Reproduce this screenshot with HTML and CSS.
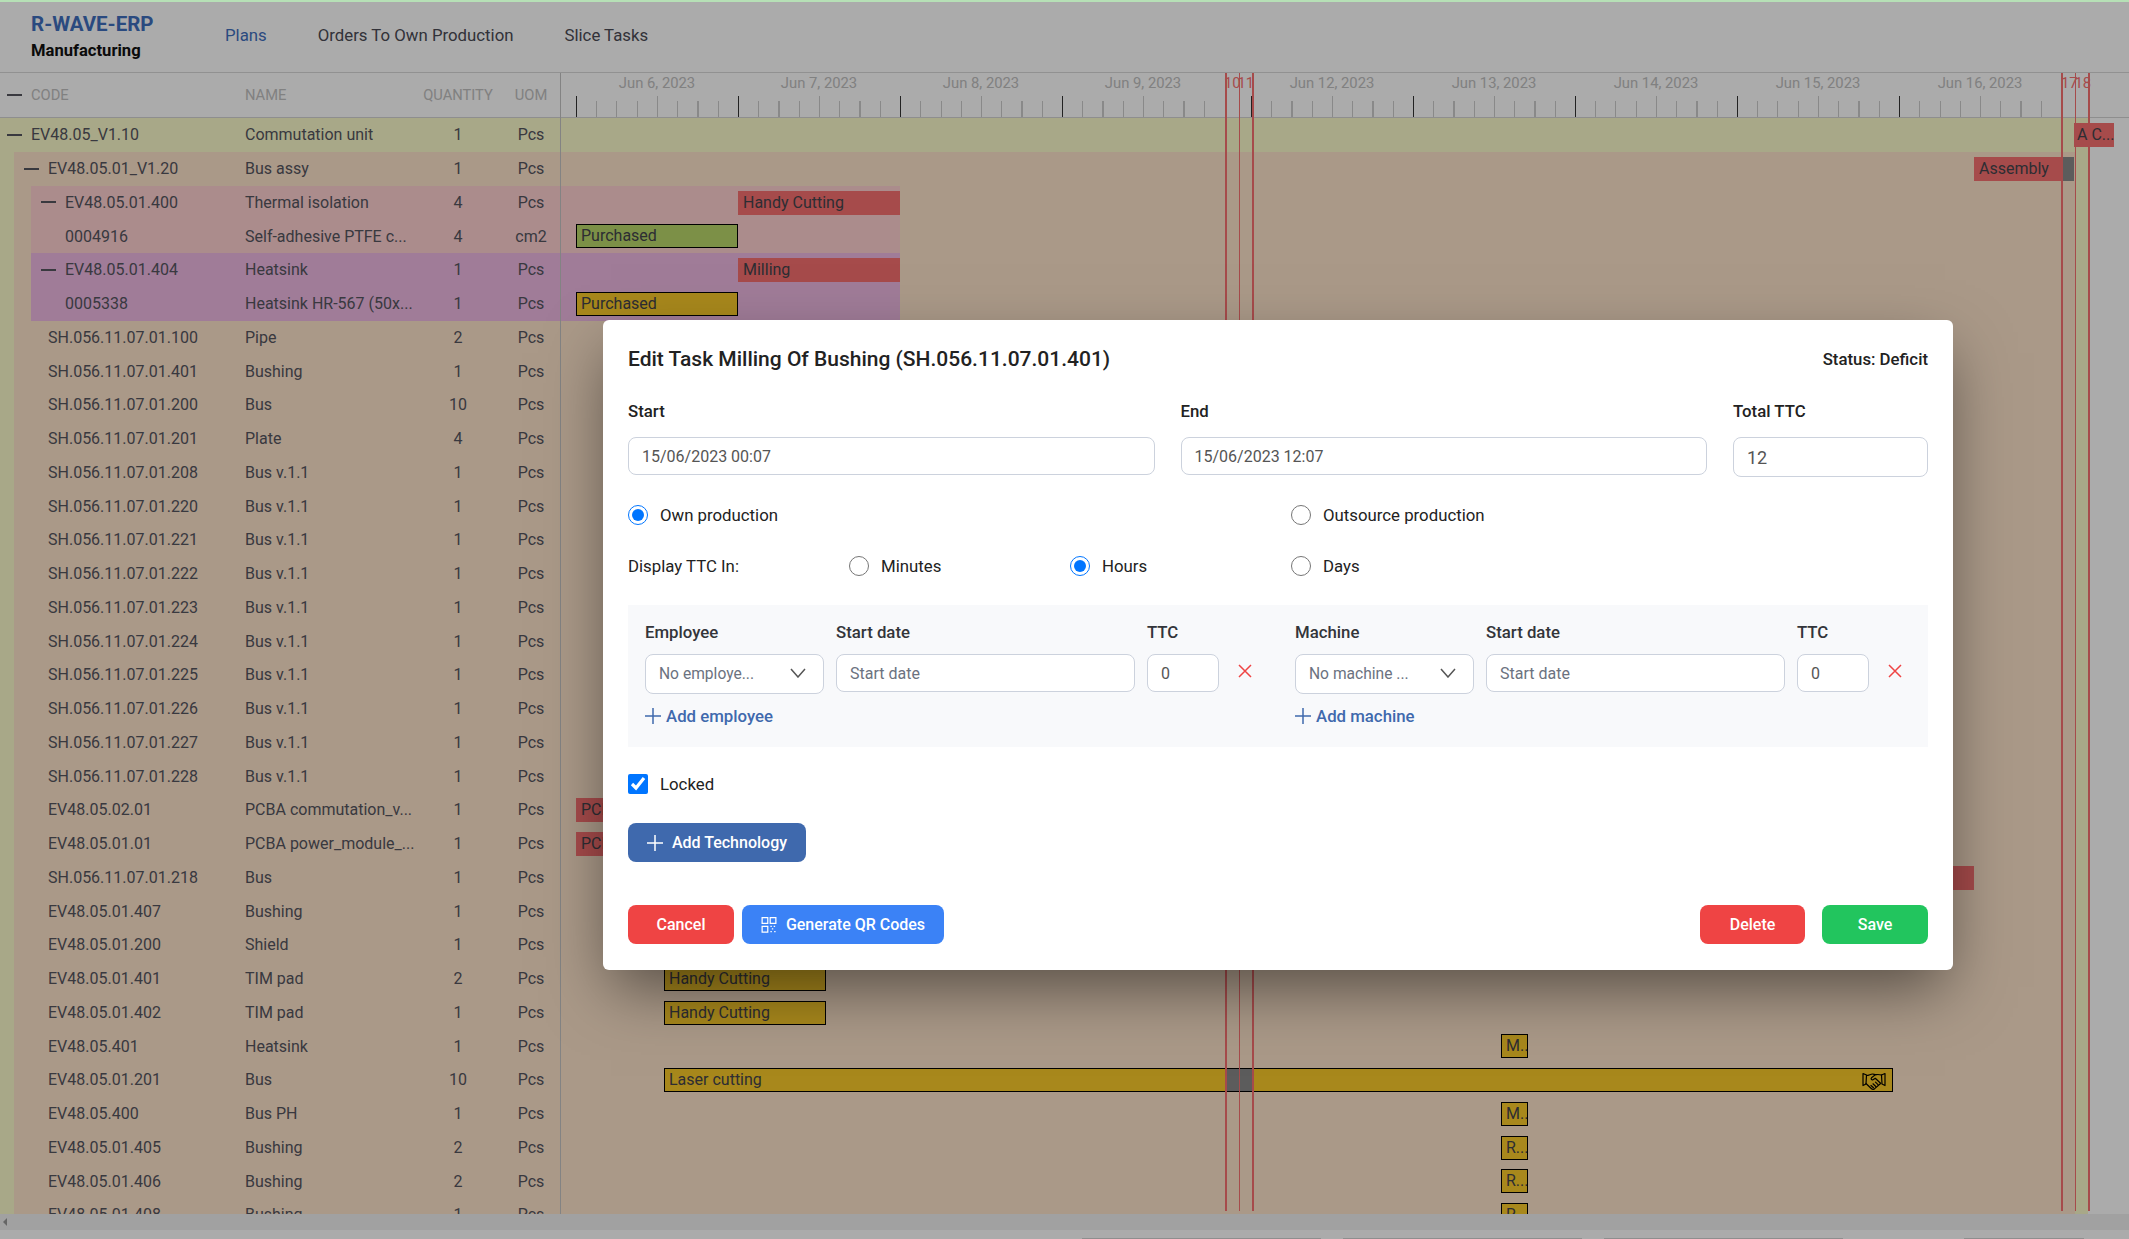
FILE: index.html
```html
<!DOCTYPE html>
<html lang="en">
  <head>
    <meta charset="UTF-8" />
    <title>R-WAVE-ERP Manufacturing</title>
    <link rel="stylesheet" href="styles.css">
  </head>
  <body>
    <div class="page">
      <div class="topline"></div>
      <div class="shell">
        <header class="navbar">
          <div class="brand">
            <div class="brand-name">R-WAVE-ERP</div>
            <div class="brand-sub">Manufacturing</div>
          </div>
          <nav class="nav">
            <a class="nav-link active">Plans</a>
            <a class="nav-link">Orders To Own Production</a>
            <a class="nav-link">Slice Tasks</a>
          </nav>
        </header>

        <div class="gantt">
          <!-- left tree table -->
          <section class="bom">
            <div class="bom-head row">
              <span class="toggle minus"></span>
              <span class="code">CODE</span>
              <span class="name">NAME</span>
              <span class="qty">QUANTITY</span>
              <span class="uom">UOM</span>
            </div>
            <div class="bom-body">
              <div class="row root"><span class="toggle minus"></span><span class="code">EV48.05_V1.10</span><span class="name">Commutation unit</span><span class="qty">1</span><span class="uom">Pcs</span></div>
              <div class="band band-brown">
                <div class="row"><span class="toggle minus"></span><span class="code">EV48.05.01_V1.20</span><span class="name">Bus assy</span><span class="qty">1</span><span class="uom">Pcs</span></div>
                <div class="band band-pink">
                  <div class="row"><span class="toggle minus"></span><span class="code">EV48.05.01.400</span><span class="name">Thermal isolation</span><span class="qty">4</span><span class="uom">Pcs</span></div>
                  <div class="row"><span class="toggle"></span><span class="code">0004916</span><span class="name">Self-adhesive PTFE c...</span><span class="qty">4</span><span class="uom">cm2</span></div>
                </div>
                <div class="band band-purple">
                  <div class="row"><span class="toggle minus"></span><span class="code">EV48.05.01.404</span><span class="name">Heatsink</span><span class="qty">1</span><span class="uom">Pcs</span></div>
                  <div class="row"><span class="toggle"></span><span class="code">0005338</span><span class="name">Heatsink HR-567 (50x...</span><span class="qty">1</span><span class="uom">Pcs</span></div>
                </div>
                <div class="row"><span class="toggle"></span><span class="code">SH.056.11.07.01.100</span><span class="name">Pipe</span><span class="qty">2</span><span class="uom">Pcs</span></div>
                <div class="row"><span class="toggle"></span><span class="code">SH.056.11.07.01.401</span><span class="name">Bushing</span><span class="qty">1</span><span class="uom">Pcs</span></div>
                <div class="row"><span class="toggle"></span><span class="code">SH.056.11.07.01.200</span><span class="name">Bus</span><span class="qty">10</span><span class="uom">Pcs</span></div>
                <div class="row"><span class="toggle"></span><span class="code">SH.056.11.07.01.201</span><span class="name">Plate</span><span class="qty">4</span><span class="uom">Pcs</span></div>
                <div class="row"><span class="toggle"></span><span class="code">SH.056.11.07.01.208</span><span class="name">Bus v.1.1</span><span class="qty">1</span><span class="uom">Pcs</span></div>
                <div class="row"><span class="toggle"></span><span class="code">SH.056.11.07.01.220</span><span class="name">Bus v.1.1</span><span class="qty">1</span><span class="uom">Pcs</span></div>
                <div class="row"><span class="toggle"></span><span class="code">SH.056.11.07.01.221</span><span class="name">Bus v.1.1</span><span class="qty">1</span><span class="uom">Pcs</span></div>
                <div class="row"><span class="toggle"></span><span class="code">SH.056.11.07.01.222</span><span class="name">Bus v.1.1</span><span class="qty">1</span><span class="uom">Pcs</span></div>
                <div class="row"><span class="toggle"></span><span class="code">SH.056.11.07.01.223</span><span class="name">Bus v.1.1</span><span class="qty">1</span><span class="uom">Pcs</span></div>
                <div class="row"><span class="toggle"></span><span class="code">SH.056.11.07.01.224</span><span class="name">Bus v.1.1</span><span class="qty">1</span><span class="uom">Pcs</span></div>
                <div class="row"><span class="toggle"></span><span class="code">SH.056.11.07.01.225</span><span class="name">Bus v.1.1</span><span class="qty">1</span><span class="uom">Pcs</span></div>
                <div class="row"><span class="toggle"></span><span class="code">SH.056.11.07.01.226</span><span class="name">Bus v.1.1</span><span class="qty">1</span><span class="uom">Pcs</span></div>
                <div class="row"><span class="toggle"></span><span class="code">SH.056.11.07.01.227</span><span class="name">Bus v.1.1</span><span class="qty">1</span><span class="uom">Pcs</span></div>
                <div class="row"><span class="toggle"></span><span class="code">SH.056.11.07.01.228</span><span class="name">Bus v.1.1</span><span class="qty">1</span><span class="uom">Pcs</span></div>
                <div class="row"><span class="toggle"></span><span class="code">EV48.05.02.01</span><span class="name">PCBA commutation_v...</span><span class="qty">1</span><span class="uom">Pcs</span></div>
                <div class="row"><span class="toggle"></span><span class="code">EV48.05.01.01</span><span class="name">PCBA power_module_...</span><span class="qty">1</span><span class="uom">Pcs</span></div>
                <div class="row"><span class="toggle"></span><span class="code">SH.056.11.07.01.218</span><span class="name">Bus</span><span class="qty">1</span><span class="uom">Pcs</span></div>
                <div class="row"><span class="toggle"></span><span class="code">EV48.05.01.407</span><span class="name">Bushing</span><span class="qty">1</span><span class="uom">Pcs</span></div>
                <div class="row"><span class="toggle"></span><span class="code">EV48.05.01.200</span><span class="name">Shield</span><span class="qty">1</span><span class="uom">Pcs</span></div>
                <div class="row"><span class="toggle"></span><span class="code">EV48.05.01.401</span><span class="name">TIM pad</span><span class="qty">2</span><span class="uom">Pcs</span></div>
                <div class="row"><span class="toggle"></span><span class="code">EV48.05.01.402</span><span class="name">TIM pad</span><span class="qty">1</span><span class="uom">Pcs</span></div>
                <div class="row"><span class="toggle"></span><span class="code">EV48.05.401</span><span class="name">Heatsink</span><span class="qty">1</span><span class="uom">Pcs</span></div>
                <div class="row"><span class="toggle"></span><span class="code">EV48.05.01.201</span><span class="name">Bus</span><span class="qty">10</span><span class="uom">Pcs</span></div>
                <div class="row"><span class="toggle"></span><span class="code">EV48.05.400</span><span class="name">Bus PH</span><span class="qty">1</span><span class="uom">Pcs</span></div>
                <div class="row"><span class="toggle"></span><span class="code">EV48.05.01.405</span><span class="name">Bushing</span><span class="qty">2</span><span class="uom">Pcs</span></div>
                <div class="row"><span class="toggle"></span><span class="code">EV48.05.01.406</span><span class="name">Bushing</span><span class="qty">2</span><span class="uom">Pcs</span></div>
                <div class="row"><span class="toggle"></span><span class="code">EV48.05.01.408</span><span class="name">Bushing</span><span class="qty">1</span><span class="uom">Pcs</span></div>
              </div>
            </div>
          </section>

          <!-- timeline -->
          <section class="chart">
            <div class="scale">
              <div class="day"><span>Jun 6, 2023</span></div>
              <div class="day"><span>Jun 7, 2023</span></div>
              <div class="day"><span>Jun 8, 2023</span></div>
              <div class="day"><span>Jun 9, 2023</span></div>
              <div class="off">10</div>
              <div class="off">11</div>
              <div class="day"><span>Jun 12, 2023</span></div>
              <div class="day"><span>Jun 13, 2023</span></div>
              <div class="day"><span>Jun 14, 2023</span></div>
              <div class="day"><span>Jun 15, 2023</span></div>
              <div class="day"><span>Jun 16, 2023</span></div>
              <div class="off">17</div>
              <div class="off">18</div>
            </div>
            <div class="lanes">
              <div class="lane lane-root"><div class="bar red fit" style="left:1513px;width:40px">A C...</div></div>
              <div class="lane"><div class="bar red" style="left:1413px;width:100px">Assembly<i class="gap gap-end"></i></div></div>
              <div class="lane lane-pink"><div class="bar red" style="left:177px;width:162px">Handy Cutting</div></div>
              <div class="lane lane-pink"><div class="bar green outlined" style="left:15px;width:162px">Purchased</div></div>
              <div class="lane lane-purple"><div class="bar red" style="left:177px;width:162px">Milling</div></div>
              <div class="lane lane-purple"><div class="bar yellow outlined" style="left:15px;width:162px">Purchased</div></div>
              <div class="lane"></div>
              <div class="lane"></div>
              <div class="lane"></div>
              <div class="lane"></div>
              <div class="lane"></div>
              <div class="lane"></div>
              <div class="lane"></div>
              <div class="lane"></div>
              <div class="lane"></div>
              <div class="lane"></div>
              <div class="lane"></div>
              <div class="lane"></div>
              <div class="lane"></div>
              <div class="lane"></div>
              <div class="lane"><div class="bar red" style="left:15px;width:162px">PCBA</div></div>
              <div class="lane"><div class="bar red" style="left:15px;width:162px">PCBA</div></div>
              <div class="lane"><div class="bar red" style="left:1340px;width:73px"></div></div>
              <div class="lane"></div>
              <div class="lane"></div>
              <div class="lane"><div class="bar yellow outlined" style="left:103px;width:162px">Handy Cutting</div></div>
              <div class="lane"><div class="bar yellow outlined" style="left:103px;width:162px">Handy Cutting</div></div>
              <div class="lane"><div class="bar yellow outlined" style="left:940px;width:27px">M...</div></div>
              <div class="lane">
                <div class="bar yellow outlined" style="left:103px;width:1229px">
                  Laser cutting
                  <i class="gap" style="left:560px;width:27px"></i>
                  <svg class="shake" viewBox="0 0 24 20" fill="none" stroke="#000" stroke-width="1.2" stroke-linejoin="round" stroke-linecap="round">
                    <path d="M1 2.500l3.500 1.500-.500 9-3 1.500z" />
                    <path d="M23 2.500l-3.500 1.500.500 9 3 1.500z" />
                    <path d="M4.500 4.500c2.500 0 4-1.500 6-1.500 1.200 0 2 .600 3 .600 1.500 0 3.500-.400 6 .400" />
                    <path d="M13.500 3.600l-4 3.200c-1 1 .200 2.600 1.500 2l2.300-1.500 5.500 5.200" />
                    <path d="M4 12.500l5.500 5.300c1 1 2.500.800 3.200-.200l5.300-4.600" />
                    <path d="M9 14.500l2.500 2.300M11 12.800l2.800 2.700M13.500 11.200l2.500 2.500" />
                  </svg>
                </div>
              </div>
              <div class="lane"><div class="bar yellow outlined" style="left:940px;width:27px">M...</div></div>
              <div class="lane"><div class="bar yellow outlined" style="left:940px;width:27px">R...</div></div>
              <div class="lane"><div class="bar yellow outlined" style="left:940px;width:27px">R...</div></div>
              <div class="lane"><div class="bar yellow outlined" style="left:940px;width:27px">R...</div></div>
            </div>
            <i class="mark wide" style="left:664px"></i>
            <i class="mark" style="left:678px"></i>
            <i class="mark wide" style="left:691px"></i>
            <i class="mark wide" style="left:1500px"></i>
            <i class="mark" style="left:1514px"></i>
            <i class="mark wide" style="left:1527px"></i>
          </section>
        </div>

        <div class="hscroll"><span class="hscroll-arrow"></span></div>
        <div class="footer-strip">
          <span class="strip-tab"></span>
          <span class="strip-tab"></span>
          <span class="strip-tab"></span>
          <span class="strip-tab short"></span>
        </div>
      </div>

      <div class="overlay"></div>

      <div class="modal">
        <div class="modal-title">
          <h2>Edit Task Milling Of Bushing (SH.056.11.07.01.401)</h2>
          <span class="status">Status: Deficit</span>
        </div>

        <div class="fields">
          <div class="field">
            <label>Start</label>
            <input class="input" type="text" value="15/06/2023 00:07">
          </div>
          <div class="field">
            <label>End</label>
            <input class="input" type="text" value="15/06/2023 12:07">
          </div>
          <div class="field">
            <label>Total TTC</label>
            <input class="input input-big" type="text" value="12">
          </div>
        </div>

        <div class="choice-row first">
          <label class="choice"><input type="radio" name="prod" checked>Own production</label>
          <label class="choice push"><input type="radio" name="prod">Outsource production</label>
        </div>
        <div class="choice-row">
          <span class="choice-title">Display TTC In:</span>
          <label class="choice"><input type="radio" name="ttc">Minutes</label>
          <label class="choice"><input type="radio" name="ttc" checked>Hours</label>
          <label class="choice"><input type="radio" name="ttc">Days</label>
        </div>

        <div class="panel">
          <div class="resource">
            <div class="resource-grid">
              <label>Employee</label>
              <label>Start date</label>
              <label>TTC</label>
              <span></span>
              <div class="select">No employe...
                <svg viewBox="0 0 16 10" fill="none" stroke="#555" stroke-width="1.500"><path d="M1 1l7 8 7-8" /></svg>
              </div>
              <input class="input" type="text" placeholder="Start date">
              <input class="input" type="text" value="0">
              <svg class="remove" viewBox="0 0 14 14" fill="none" stroke="#ef4444" stroke-width="1.500"><path d="M1 1l12 12M13 1L1 13" /></svg>
            </div>
            <a class="add-link">
              <svg viewBox="0 0 16 16" fill="none" stroke="currentColor" stroke-width="1.500"><path d="M8 0v16M0 8h16" /></svg>
              Add employee
            </a>
          </div>
          <div class="resource">
            <div class="resource-grid">
              <label>Machine</label>
              <label>Start date</label>
              <label>TTC</label>
              <span></span>
              <div class="select">No machine ...
                <svg viewBox="0 0 16 10" fill="none" stroke="#555" stroke-width="1.500"><path d="M1 1l7 8 7-8" /></svg>
              </div>
              <input class="input" type="text" placeholder="Start date">
              <input class="input" type="text" value="0">
              <svg class="remove" viewBox="0 0 14 14" fill="none" stroke="#ef4444" stroke-width="1.500"><path d="M1 1l12 12M13 1L1 13" /></svg>
            </div>
            <a class="add-link">
              <svg viewBox="0 0 16 16" fill="none" stroke="currentColor" stroke-width="1.500"><path d="M8 0v16M0 8h16" /></svg>
              Add machine
            </a>
          </div>
        </div>

        <label class="choice locked"><input type="checkbox" checked>Locked</label>

        <button class="btn btn-tech">
          <svg viewBox="0 0 16 16" fill="none" stroke="#fff" stroke-width="1.500"><path d="M8 0v16M0 8h16" /></svg>
          Add Technology
        </button>

        <div class="modal-actions">
          <button class="btn btn-red btn-cancel">Cancel</button>
          <button class="btn btn-blue">
            <svg viewBox="0 0 16 17" fill="none" stroke="#fff" stroke-width="1.300">
              <path d="M.7.700h6v6h-6zM9.300.700h6v6h-6zM.7 10h6v6h-6z" />
              <path d="M9.500 10h1.500M13 10h2M11 12.500h2.500M9.500 15.500h2M13.500 15.500h2" stroke-dasharray="1.500 1" />
            </svg>
            Generate QR Codes
          </button>
          <span class="spacer"></span>
          <button class="btn btn-red btn-delete">Delete</button>
          <button class="btn btn-green">Save</button>
        </div>
      </div>
    </div>
  </body>
</html>
```

FILE: styles.css
```css
* {
  box-sizing: border-box;
}
html,
body {
  margin: 0;
  height: 100%;
  overflow: hidden;
}
body {
  font-family: Roboto, "Liberation Sans", sans-serif;
  font-size: 16px;
  color: #55555f;
  background: #fff;
}
.page {
  position: relative;
  height: 1239px;
  display: flex;
  flex-direction: column;
}
.topline {
  height: 2px;
  background: #b6e0b6;
}
.shell {
  flex: 1;
  min-height: 0;
  display: flex;
  flex-direction: column;
}

/* top bar */
.navbar {
  height: 70px;
  display: flex;
  align-items: center;
  padding-left: 31px;
}
.brand {
  width: 194px;
  padding-bottom: 1px;
}
.brand-name {
  font-size: 20.500px;
  font-weight: 700;
  line-height: 28px;
  color: #3f6fbe;
}
.brand-sub {
  font-size: 16.600px;
  font-weight: 700;
  line-height: 25px;
  color: #111;
}
.nav {
  display: flex;
  gap: 51px;
  margin-top: -5px;
  font-size: 16.800px;
}
.nav-link {
  color: #4b4b55;
}
.nav-link.active {
  color: #3f6fbe;
}

/* gantt */
.gantt {
  flex: 1;
  min-height: 0;
  display: flex;
  overflow: hidden;
  border-top: 1px solid #d8d8d8;
}
.bom {
  width: 560px;
  flex-shrink: 0;
}
.row {
  height: 33.75px;
  display: flex;
  align-items: center;
  padding-left: 10px;
}
.row.root {
  padding-left: 7px;
}
.bom-head {
  height: 45px;
  padding-left: 7px;
  border-bottom: 1px solid #d4d4d4;
  color: #c0c0c0;
  font-size: 14.700px;
}
.toggle {
  width: 15px;
  flex-shrink: 0;
  margin-right: 9px;
}
.toggle.minus {
  height: 2px;
  background: #55555f;
}
.code {
  flex: 1;
  white-space: nowrap;
}
.name {
  width: 178px;
  white-space: nowrap;
}
.qty {
  width: 70px;
  text-align: center;
}
.uom {
  width: 58px;
  margin-left: 9px;
  text-align: center;
}
.bom-body {
  background: #fbfbcb;
}
.band-brown {
  margin-left: 14px;
  background: #fee4cb;
}
.band-pink {
  margin-left: 17px;
  background: #ffd1d1;
}
.band-purple {
  margin-left: 17px;
  background: #efb9e3;
}

.chart {
  position: relative;
  flex: 1;
  border-left: 1px solid #c4c4c4;
}
.scale {
  height: 45px;
  display: flex;
  padding-left: 15px;
  border-bottom: 1px solid #d4d4d4;
  color: #c0c0c0;
  font-size: 14.800px;
}
.day {
  width: 162px;
  flex-shrink: 0;
  text-align: center;
  line-height: 21px;
  background:
    linear-gradient(#333, #333) 0 100% / 1px 21px no-repeat,
    linear-gradient(#ccc, #ccc) 81px 100% / 1px 21px no-repeat,
    repeating-linear-gradient(to right, #ccc 0 1px, transparent 1px 20.25px) 0 100% / 100% 16px no-repeat;
}
.off {
  width: 13.500px;
  flex-shrink: 0;
  line-height: 21px;
  text-align: center;
  color: #f87171;
}
.lanes {
  width: 1527px;
  background: #fbfbcb;
}
.lane {
  position: relative;
  width: 1514px;
  height: 33.75px;
  background: #fee4cb;
}
.lane-root {
  background: transparent;
}
.lane-pink {
  background: linear-gradient(to right, #ffd1d1 339px, #fee4cb 339px);
}
.lane-purple {
  background: linear-gradient(to right, #efb9e3 339px, #fee4cb 339px);
}
.bar {
  position: absolute;
  top: 5px;
  height: 24px;
  line-height: 24px;
  padding-left: 5px;
  color: #44444c;
  white-space: nowrap;
  overflow: hidden;
}
.bar.fit {
  padding-left: 3px;
  overflow: visible;
}
.bar.red {
  background: #f87171;
}
.bar.green {
  background: #b9d76b;
}
.bar.yellow {
  background: #fbcb2a;
}
.bar.outlined {
  border: 1px solid #000;
  line-height: 22px;
  padding-left: 4px;
}
.gap {
  position: absolute;
  top: 0;
  bottom: 0;
  background: #8a8a8a;
}
.gap-end {
  right: 0;
  width: 12px;
}
.shake {
  position: absolute;
  right: 6px;
  top: 2px;
  width: 24px;
  height: 20px;
}
.mark {
  position: absolute;
  top: 0;
  bottom: 3px;
  width: 1px;
  background: #f87171;
}
.mark.wide {
  width: 2px;
}

.hscroll {
  height: 16px;
  flex-shrink: 0;
  background: #f1f1f1;
  padding: 4px 0 0 3px;
}
.hscroll-arrow {
  display: block;
  width: 0;
  border: 4px solid transparent;
  border-right: 4px solid #999;
  border-left: 0;
}
.footer-strip {
  height: 9px;
  flex-shrink: 0;
  display: flex;
  align-items: flex-end;
  padding-left: 1082px;
  gap: 22px;
}
.strip-tab {
  width: 239px;
  height: 1px;
  background: #d4d4d4;
}
.strip-tab.short {
  width: 120px;
  margin-left: 99px;
}

/* modal */
.overlay {
  position: absolute;
  inset: 2px 0 0 0;
  background: rgba(0, 0, 0, 0.33);
}
.modal {
  position: absolute;
  left: 603px;
  top: 320px;
  width: 1350px;
  height: 650px;
  padding: 25px 25px 26px 25px;
  background: #fff;
  border-radius: 6px;
  color: #222;
  font-size: 16.800px;
  box-shadow: 0 25px 60px -8px rgba(0, 0, 0, 0.5);
}
.modal-title {
  display: flex;
  justify-content: space-between;
  align-items: center;
  height: 28px;
}
.modal-title h2 {
  margin: 0;
  font-size: 21px;
  font-weight: 500;
}
.status {
  font-weight: 500;
}
label {
  font-weight: 500;
  line-height: 20px;
}
.fields {
  display: grid;
  grid-template-columns: 1fr 1fr 195px;
  gap: 26px;
  margin-top: 28px;
  align-items: start;
}
.field label {
  display: block;
  margin-bottom: 16px;
}
.input {
  width: 100%;
  height: 38px;
  padding: 0 13px;
  border: 1px solid #ccd2dd;
  border-radius: 8px;
  font: 16px Roboto, sans-serif;
  color: #555;
  background: #fff;
}
.input::placeholder {
  color: #6b7280;
}
.input-big {
  height: 40px;
  font-size: 18px;
}
.choice-row {
  display: grid;
  grid-template-columns: repeat(6, 1fr);
  column-gap: 26px;
  height: 20px;
  margin-top: 31px;
  align-items: center;
}
.choice-row.first {
  margin-top: 28px;
}
.choice-row .choice {
  padding-left: 0;
}
.choice-row.first .choice {
  grid-column: span 3;
}
.choice-row.first .push {
  grid-column: 4 / span 3;
}
.choice-title {
  line-height: 20px;
}
.choice-row:not(.first) .choice:nth-child(2) {
  grid-column: 2;
}
.choice-row:not(.first) .choice:nth-child(3) {
  grid-column: 3;
}
.choice-row:not(.first) .choice:nth-child(4) {
  grid-column: 4;
}
.choice {
  display: flex;
  align-items: center;
  gap: 12px;
  font-weight: 400;
}
.choice input {
  width: 20px;
  height: 20px;
  margin: 0;
}
.panel {
  display: grid;
  grid-template-columns: 1fr 1fr;
  column-gap: 34px;
  height: 142px;
  margin-top: 29px;
  padding: 17px 17px 0;
  background: #f8f9fb;
}
.resource-grid {
  display: grid;
  grid-template-columns: 179px 299px 72px 1fr;
  column-gap: 12px;
  row-gap: 12px;
  align-items: start;
}
.resource-grid label {
  color: #33353a;
}
.select {
  position: relative;
  height: 40px;
  padding-left: 13px;
  line-height: 38px;
  border: 1px solid #ccd2dd;
  border-radius: 8px;
  background: #fff;
  font-size: 15.600px;
  color: #6b7280;
}
.select svg {
  position: absolute;
  right: 17px;
  top: 13px;
  width: 16px;
  height: 10px;
}
.remove {
  width: 14px;
  height: 14px;
  margin: 10px 0 0 7px;
}
.add-link {
  display: flex;
  align-items: center;
  gap: 5px;
  margin-top: 12px;
  line-height: 20px;
  font-weight: 500;
  color: #3f69ad;
}
.add-link svg {
  width: 16px;
  height: 16px;
}
.locked {
  height: 20px;
  margin-top: 27px;
}
.btn {
  display: inline-flex;
  align-items: center;
  justify-content: center;
  gap: 9px;
  height: 39px;
  border: 0;
  border-radius: 8px;
  font: 500 16px Roboto, sans-serif;
  color: #fff;
}
.btn svg {
  width: 16px;
  height: 16px;
}
.btn-tech {
  width: 178px;
  margin-top: 29px;
  background: #3f69ad;
}
.modal-actions {
  display: flex;
  margin-top: 43px;
}
.spacer {
  flex: 1;
}
.btn-red {
  width: 105px;
  background: #ef4444;
}
.btn-cancel {
  width: 106px;
  margin-right: 8px;
}
.btn-delete {
  margin-right: 17px;
}
.btn-blue {
  width: 202px;
  background: #3b82f6;
}
.btn-green {
  width: 106px;
  background: #22c55e;
}
```
